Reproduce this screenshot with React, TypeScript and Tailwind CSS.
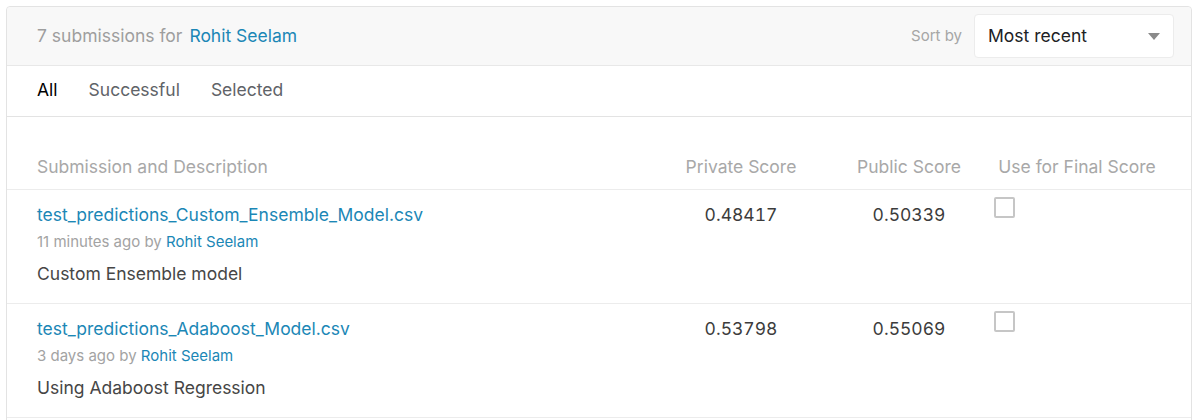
import { useState } from "react";

const submissions = [
  {
    file: "test_predictions_Custom_Ensemble_Model.csv",
    when: "11 minutes ago",
    author: "Rohit Seelam",
    description: "Custom Ensemble model",
    privateScore: "0.48417",
    publicScore: "0.50339",
  },
  {
    file: "test_predictions_Adaboost_Model.csv",
    when: "3 days ago",
    author: "Rohit Seelam",
    description: "Using Adaboost Regression",
    privateScore: "0.53798",
    publicScore: "0.55069",
  },
];

const tabs = ["All", "Successful", "Selected"];

export default function App() {
  const [active, setActive] = useState("All");
  const [selected, setSelected] = useState<Record<string, boolean>>({});

  return (
    <div className="min-h-screen bg-white pl-[6px] pr-[8px] pt-[6px] font-['Inter',_'Liberation_Sans',_sans-serif]">
      <div className="rounded-t-[4px] border border-[#e3e3e3] pb-10">
        {/* Header */}
        <div className="flex items-center justify-between rounded-t-[4px] border-b border-[#e8e8e8] bg-[#f8f8f8] py-[7px] pl-[30px] pr-[17px]">
          <div className="text-[17.5px] leading-6 text-[#9e9e9e]">
            7 submissions for{" "}
            <a href="#" className="ml-[2px] text-[#1b87b6]">
              Rohit Seelam
            </a>
          </div>
          <div className="flex items-center gap-3">
            <span className="text-[15px] text-[#a6a6a6]">Sort by</span>
            <button
              type="button"
              className="flex h-[44px] w-[200px] items-center justify-between rounded-[4px] border border-[#ececec] bg-white pl-[13px] pr-[13px] text-[17.5px] text-[#202124]"
            >
              Most recent
              <svg width="12" height="7" viewBox="0 0 12 7">
                <path d="M0 0h12L6 7z" fill="#8a8a8a" />
              </svg>
            </button>
          </div>
        </div>

        {/* Tabs */}
        <div className="flex gap-[31px] border-b border-[#e3e3e3] px-[30px] pb-[14px] pt-[12px] text-[17.5px] leading-6">
          {tabs.map((tab) => (
            <button
              key={tab}
              type="button"
              onClick={() => setActive(tab)}
              className={active === tab ? "text-black" : "text-[#5f6368]"}
            >
              {tab}
            </button>
          ))}
        </div>

        {/* Column headings */}
        <div className="grid grid-cols-[1fr_168px_168px_168px] border-b border-[#ececec] px-[30px] pb-[10px] pt-[38px] text-[17.5px] leading-6 text-[#a8a8a8]">
          <div>Submission and Description</div>
          <div className="text-center">Private Score</div>
          <div className="text-center">Public Score</div>
          <div className="whitespace-nowrap text-center">Use for Final Score</div>
        </div>

        {/* Rows */}
        {submissions.map((s) => (
          <div
            key={s.file}
            className="grid grid-cols-[1fr_168px_168px_168px] items-start border-b border-[#ececec] px-[30px] pb-[17px] pt-[7px]"
          >
            <div className="pt-[6px]">
              <a href="#" className="block text-[17.5px] leading-6 text-[#1b87b6]">
                {s.file}
              </a>
              <div className="mt-[5px] text-[15px] leading-5 text-[#a3a3a3]">
                {s.when} by <a href="#" className="text-[#1b87b6]">{s.author}</a>
              </div>
              <div className="mt-[10px] text-[17.5px] leading-6 text-[#464646]">
                {s.description}
              </div>
            </div>
            <div className="pt-[6px] text-center text-[17.5px] leading-6 tabular-nums text-[#3c3c3c]">
              {s.privateScore}
            </div>
            <div className="pt-[6px] text-center text-[17.5px] leading-6 tabular-nums text-[#3c3c3c]">
              {s.publicScore}
            </div>
            <div>
              <button
                type="button"
                onClick={() => setSelected((p) => ({ ...p, [s.file]: !p[s.file] }))}
                className="ml-[1px] block h-[21px] w-[21px] rounded-[2px] border-2 border-[#c6c6c6] bg-white"
                aria-label="Use for final score"
              />
            </div>
          </div>
        ))}
      </div>
    </div>
  );
}
